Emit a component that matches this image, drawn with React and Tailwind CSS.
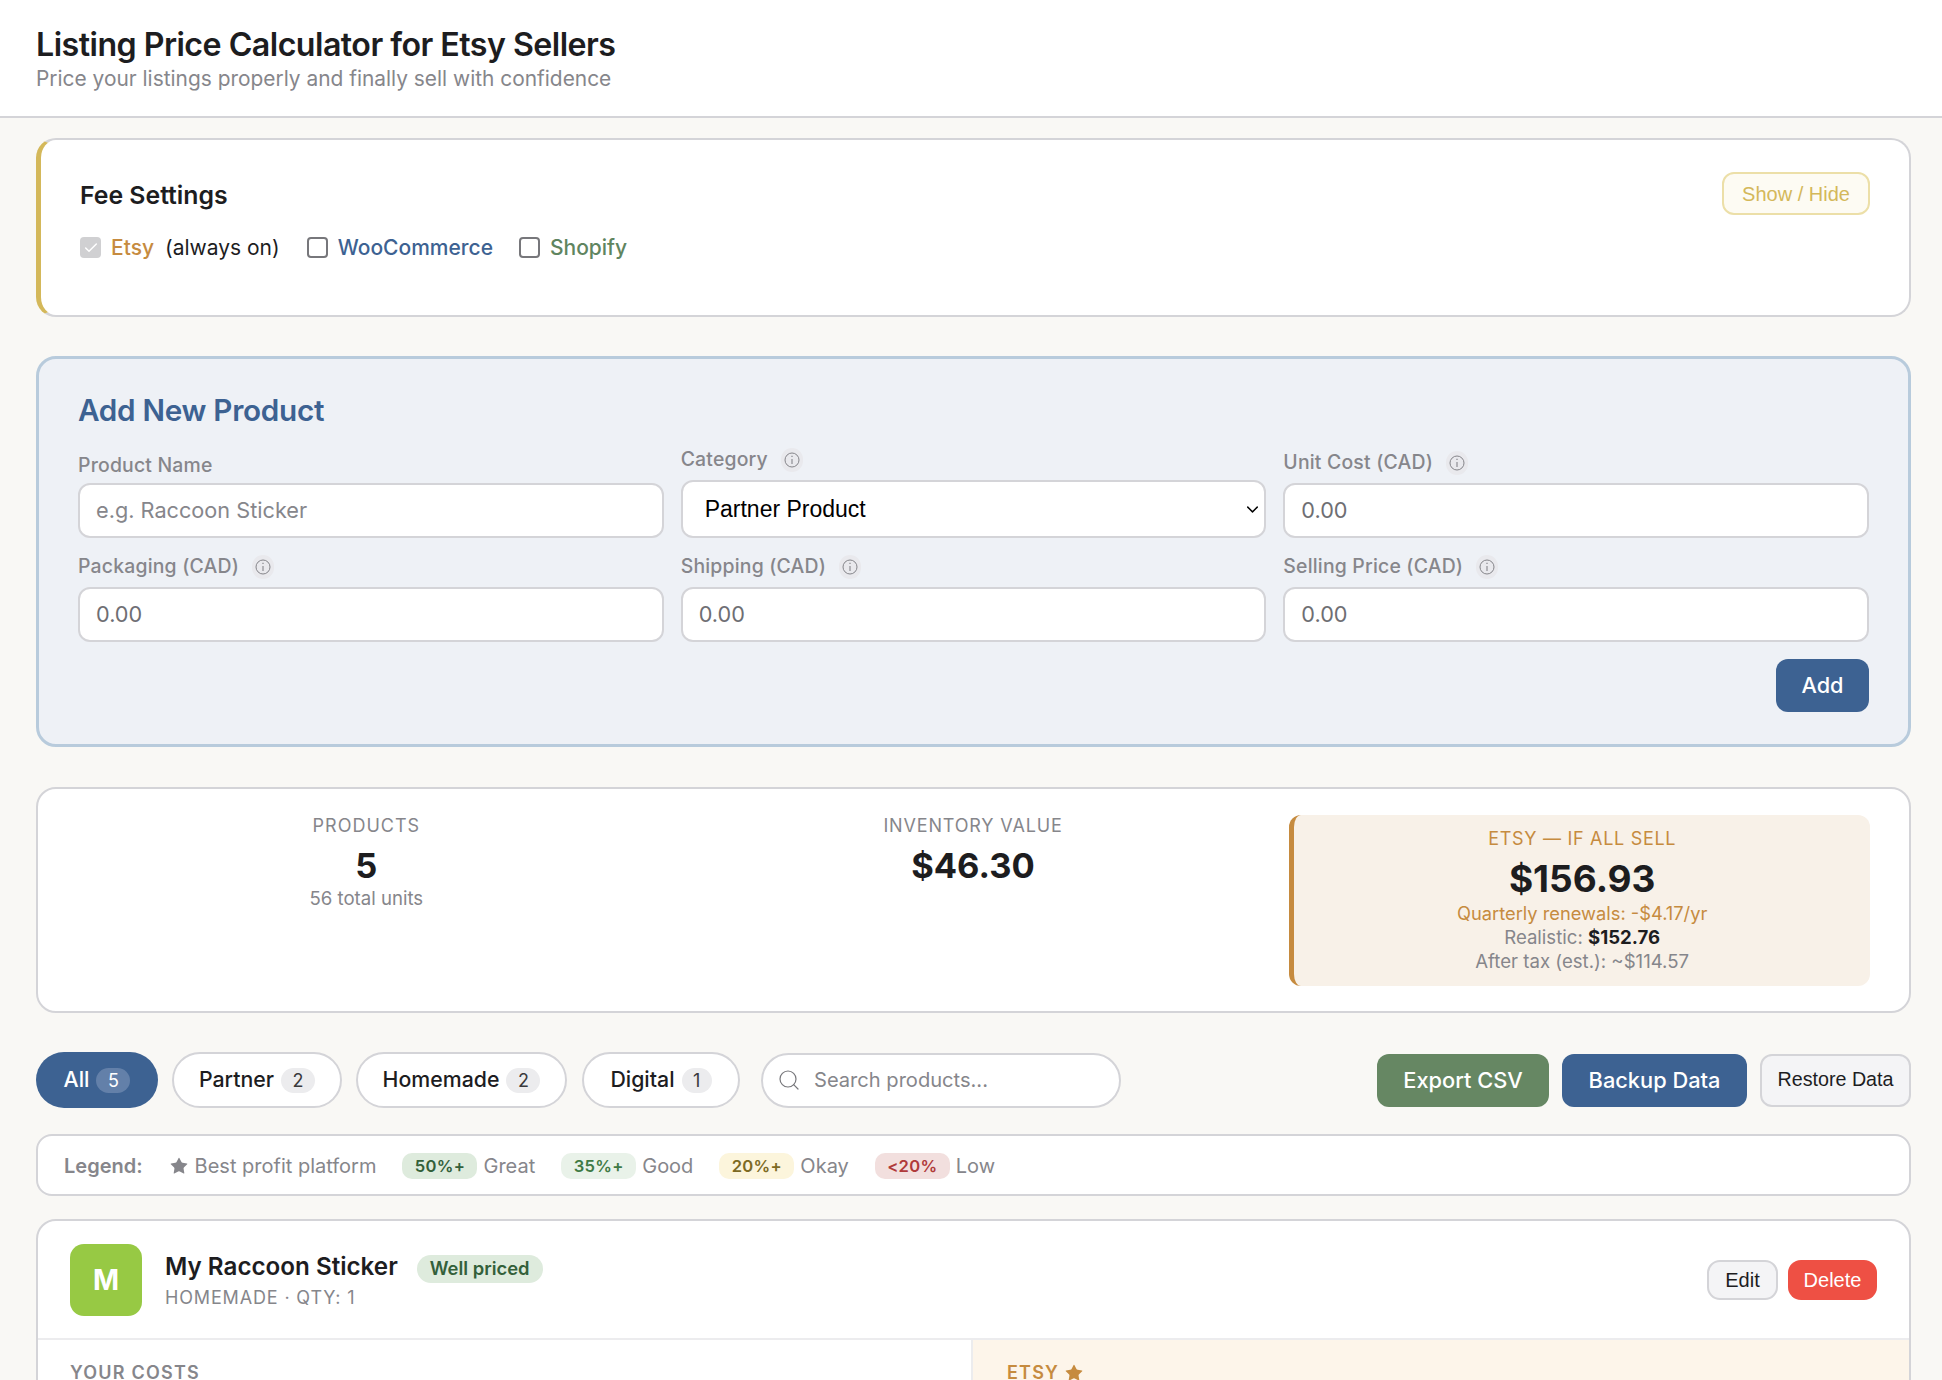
import React from "react";
import { Search, Star, Check, ChevronDown } from "lucide-react";

function Tip() {
  return (
    <span className="inline-flex items-center justify-center w-[22px] h-[24px] rounded-full bg-[#e9e9ed] ml-[13px]">
      <svg width="16" height="16" viewBox="0 0 16 16" fill="none" stroke="#85858a" strokeWidth="1">
        <circle cx="8" cy="8" r="7" />
        <path d="M8 7v5" strokeWidth="1.1" />
        <path d="M8 3.8v1.3" strokeWidth="1.2" />
      </svg>
    </span>
  );
}

function Field({ label, tip, value, placeholder }) {
  return (
    <div className="flex flex-col justify-end">
      <div className={`flex items-center h-[24px] text-[19.4px] font-medium text-[#86868b] tracking-[0.2px] ${tip ? "mb-[8px]" : "mb-[5px]"}`}>
        {label}
        {tip && <Tip />}
      </div>
      <input
        readOnly
        placeholder={placeholder}
        defaultValue={value}
        className="h-[55px] w-full rounded-[12px] border-2 border-[#d4d4d8] bg-white px-[16px] pb-[2px] text-[21.7px] text-[#6e6e73] placeholder:text-[#86868b] outline-none"
      />
    </div>
  );
}

function Pill({ label, count, active, width, countClass = "w-[34px]" }) {
  return (
    <button
      className={`flex items-center justify-center h-[56px] rounded-full text-[21.3px] font-medium ${width} ${
        active ? "bg-[#3d6292] text-white" : "bg-white border-2 border-[#d4d4d8] text-[#1d1d1f]"
      }`}
    >
      {label}
      <span
        className={`ml-[7px] flex items-center justify-center h-[25px] ${countClass} rounded-full text-[18px] font-normal ${
          active ? "bg-[#6380a9] text-white" : "bg-[#ececee] text-[#3a3a3c]"
        }`}
      >
        {count}
      </span>
    </button>
  );
}

function LegendBadge({ text, note, className }) {
  return (
    <span className="flex items-center">
      <span className={`flex items-center justify-center w-[75px] h-[26px] rounded-[10px] text-[16.6px] font-semibold tracking-[0.3px] ${className}`}>
        {text}
      </span>
      <span className="ml-[6px] text-[20px] text-[#86868b]">{note}</span>
    </span>
  );
}

export default function App() {
  return (
    <div className="h-screen overflow-hidden bg-[#f9f8f5] font-['Inter',sans-serif] text-[#1d1d1f]">
      <header className="h-[118px] bg-white border-b-2 border-[#d4d4d8] pl-[36px] pt-[25px]">
        <h1 className="text-[32.2px] leading-[40px] font-semibold tracking-[-0.54px] text-[#1d1d1f]">Listing Price Calculator for Etsy Sellers</h1>
        <p className="mt-0 text-[20.9px] leading-[28px] text-[#86868b]">Price your listings properly and finally sell with confidence</p>
      </header>

      <main className="pr-[31px] pt-[20px] pl-[36px]">
        <section className="relative h-[179px] rounded-[20px] bg-white border-2 border-l-[5px] border-[#d4d4d8] border-l-[#d4b85a] pl-[39px] pr-[39px] pt-[39px]">
          <div className="text-[24.8px] leading-[32px] font-semibold">Fee Settings</div>
          <div className="mt-[22.5px] flex items-center text-[21px] leading-[28px]">
            <span className="flex items-center justify-center w-[21px] h-[21px] rounded-[4px] bg-[#d0d0d2] text-white mr-[10px]">
              <Check size={16} strokeWidth={2.2} />
            </span>
            <span className="font-medium text-[#c68b3f]">Etsy</span>
            <span className="ml-[11px]">(always on)</span>
            <span className="ml-[27px] w-[21px] h-[21px] rounded-[4px] border-2 border-[#77777b] bg-white mr-[10px]" />
            <span className="font-medium text-[#3d6292]">WooCommerce</span>
            <span className="ml-[26px] w-[21px] h-[21px] rounded-[4px] border-2 border-[#77777b] bg-white mr-[10px]" />
            <span className="font-medium text-[#5f8560]">Shopify</span>
          </div>
          <button className="absolute right-[39px] top-[32px] w-[148px] h-[43px] rounded-[12px] border-2 border-[#ecdfa8] bg-[#fdfbf3] text-[20px] text-[#d4b85a] font-['Liberation_Sans',sans-serif]">
            Show / Hide
          </button>
        </section>

        <section className="mt-[39px] h-[391px] rounded-[20px] border-[3px] border-[#b8cbdc] bg-[#eef1f6] px-[39px] pt-[32px]">
          <h2 className="text-[29.7px] leading-[38px] font-semibold tracking-[-0.3px] text-[#3d6292]">Add New Product</h2>
          <div className="mt-[19px] grid grid-cols-3 gap-x-[17px] gap-y-[17px]">
            <Field label="Product Name" placeholder="e.g. Raccoon Sticker" />
            <div className="flex flex-col">
              <div className="flex items-center h-[24px] mb-[8px] text-[19.4px] font-medium text-[#86868b] tracking-[0.2px]">
                Category
                <Tip />
              </div>
              <div className="relative">
                <select className="appearance-none h-[58px] w-full rounded-[12px] border-2 border-[#d4d4d8] bg-white pl-[22px] pr-[4px] text-[23px] text-black font-['Liberation_Sans',sans-serif] outline-none" defaultValue="Partner Product">
                  <option>Partner Product</option>
                </select>
                <ChevronDown size={19} strokeWidth={1.8} className="absolute right-[4px] top-[20px] text-black pointer-events-none" />
              </div>
            </div>
            <Field label="Unit Cost (CAD)" tip value="0.00" />
            <Field label="Packaging (CAD)" tip value="0.00" />
            <Field label="Shipping (CAD)" tip value="0.00" />
            <Field label="Selling Price (CAD)" tip value="0.00" />
          </div>
          <div className="mt-[17px] flex justify-end">
            <button className="w-[93px] h-[53px] rounded-[12px] bg-[#3d6292] text-white text-[21.7px] font-medium">Add</button>
          </div>
        </section>

        <section className="mt-[40px] h-[226px] rounded-[20px] border-2 border-[#d4d4d8] bg-white pl-[38px] pr-[39px] pt-[25px] grid grid-cols-3 gap-x-[26px]">
          <div className="text-center">
            <div className="text-[18px] leading-[24px] text-[#86868b] tracking-[1px]">PRODUCTS</div>
            <div className="mt-[5px] text-[34.5px] leading-[46px] font-bold">5</div>
            <div className="-mt-[3px] text-[18.6px] leading-[24px] text-[#86868b]">56 total units</div>
          </div>
          <div className="text-center">
            <div className="text-[18px] leading-[24px] text-[#86868b] tracking-[0.85px]">INVENTORY VALUE</div>
            <div className="mt-[5px] text-[34.5px] leading-[46px] font-bold">$46.30</div>
          </div>
          <div className="mt-[1px] h-[171px] rounded-[12px] border-l-[5px] border-[#c68b3f] bg-[#f8f1e8] text-center pt-[12px]">
            <div className="text-[18px] leading-[24px] text-[#c68b3f] tracking-[0.7px]">ETSY — IF ALL SELL</div>
            <div className="mt-[5px] text-[37px] leading-[46px] font-bold">$156.93</div>
            <div className="-mt-[1px] text-[18.3px] leading-[24px] text-[#c68b3f]">Quarterly renewals: -$4.17/yr</div>
            <div className="text-[18.6px] leading-[24px] text-[#86868b]">
              Realistic: <span className="font-bold text-[#1d1d1f]">$152.76</span>
            </div>
            <div className="text-[18.6px] leading-[25px] text-[#86868b]">After tax (est.): ~$114.57</div>
          </div>
        </section>

        <div className="mt-[39px] flex items-center h-[56px]">
          <Pill label="All" count="5" active width="w-[122px]" />
          <div className="ml-[14px]"><Pill label="Partner" count="2" width="w-[170px]" /></div>
          <div className="ml-[14px]"><Pill label="Homemade" count="2" width="w-[211px]" /></div>
          <div className="ml-[15px]"><Pill label="Digital" count="1" countClass="w-[30px]" width="w-[158px]" /></div>
          <div className="ml-[21px] flex items-center w-[360px] h-[55px] rounded-full border-2 border-[#d4d4d8] bg-white pl-[14px]">
            <Search size={24} strokeWidth={1.2} className="text-[#77777b]" />
            <span className="ml-[13px] text-[20.1px] text-[#86868b]">Search products...</span>
          </div>
          <div className="ml-auto flex items-center gap-[13px]">
            <button className="w-[172px] h-[53px] rounded-[12px] bg-[#668763] text-white text-[21.8px] font-medium">Export CSV</button>
            <button className="w-[185px] h-[53px] rounded-[12px] bg-[#3d6292] text-white text-[21.8px] font-medium">Backup Data</button>
            <button className="w-[151px] h-[53px] rounded-[12px] border-2 border-[#d4d4d8] bg-[#f4f4f6] text-[19.7px] text-[#1d1d1f] font-['Liberation_Sans',sans-serif]">Restore Data</button>
          </div>
        </div>

        <div className="mt-[26px] h-[62px] rounded-[16px] border-2 border-[#d4d4d8] bg-white pl-[26px] pt-[2px] flex items-center">
          <span className="text-[20px] font-semibold text-[#86868b]">Legend:</span>
          <span className="ml-[26px] flex items-center text-[20px] text-[#86868b]">
            <Star size={20} fill="#86868b" strokeWidth={0} className="mr-[6px]" />
            Best profit platform
          </span>
          <span className="ml-[26px] flex items-center gap-[26px]">
            <LegendBadge text="50%+" note="Great" className="bg-[#deebdd] text-[#33603a]" />
            <LegendBadge text="35%+" note="Good" className="bg-[#e9f2e9] text-[#3f7a45]" />
            <LegendBadge text="20%+" note="Okay" className="bg-[#fcf5dc] text-[#7d6a24]" />
            <LegendBadge text="<20%" note="Low" className="bg-[#f2dfde] text-[#b03a3a]" />
          </span>
        </div>

        <section className="mt-[23px] rounded-t-[20px] border-2 border-[#d4d4d8] bg-white overflow-hidden">
          <div className="relative h-[119px] flex items-center pl-[32px] border-b-2 border-[#ececee]">
            <div className="flex items-center justify-center w-[72px] h-[72px] rounded-[14px] bg-[#97c944] text-white text-[28px] font-bold">M</div>
            <div className="ml-[23px] mt-[1px]">
              <div className="flex items-start">
                <span className="text-[24.2px] leading-[32px] font-semibold">My Raccoon Sticker</span>
                <span className="ml-[19px] mt-[4px] flex items-center h-[28px] rounded-[14px] bg-[#deebdd] px-[13px] text-[18.4px] font-semibold text-[#33603a]">Well priced</span>
              </div>
              <div className="mt-[3px] text-[18px] leading-[24px] text-[#86868b] tracking-[0.85px]">HOMEMADE · QTY: 1</div>
            </div>
            <div className="ml-auto mr-[32px] flex items-center gap-[10px] font-['Liberation_Sans',sans-serif] text-[20px]">
              <button className="w-[71px] h-[40px] rounded-[13px] border-2 border-[#d4d4d8] bg-[#f4f4f6] text-[#1d1d1f]">Edit</button>
              <button className="w-[89px] h-[40px] rounded-[13px] bg-[#ee5044] text-white">Delete</button>
            </div>
          </div>
          <div className="grid grid-cols-[933px_1fr] h-[200px]">
            <div className="pl-[32px] pt-[21px] text-[18px] leading-[24px] font-semibold text-[#86868b] tracking-[1.2px]">YOUR COSTS</div>
            <div className="bg-[#fdf5ea] border-l-2 border-[#ececee] pl-[34px] pt-[21px] flex text-[18px] leading-[24px] font-semibold text-[#c68b3f] tracking-[1.2px]">
              ETSY
              <Star size={20} fill="#c68b3f" strokeWidth={0} className="ml-[5px] mt-[2px]" />
            </div>
          </div>
        </section>
      </main>
    </div>
  );
}
